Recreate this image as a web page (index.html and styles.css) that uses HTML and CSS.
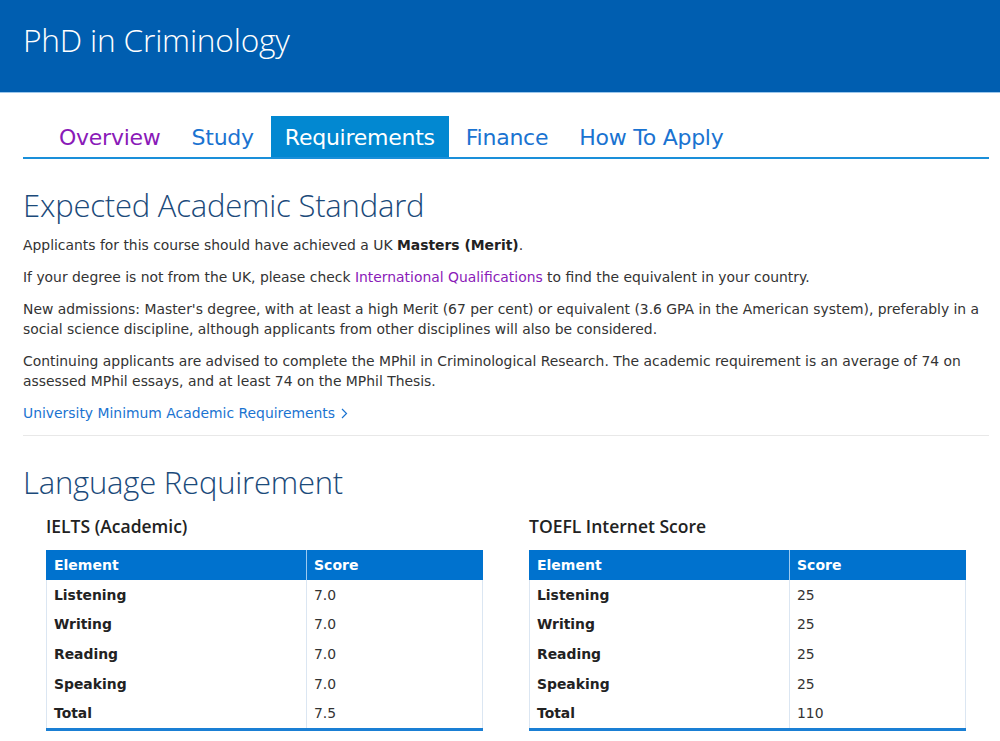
FILE: index.html
```html
<!DOCTYPE html>
<html lang="en">
<head>
<meta charset="utf-8">
<title>PhD in Criminology</title>
<link rel="stylesheet" href="styles.css">
</head>
<body>
<header class="banner">
  <h1 class="banner-title">PhD in Criminology</h1>
</header>
<main class="page">
  <nav class="tabs">
    <a class="tab tab-visited" href="#">Overview</a>
    <a class="tab" href="#">Study</a>
    <a class="tab tab-active" href="#">Requirements</a>
    <a class="tab" href="#">Finance</a>
    <a class="tab" href="#">How To Apply</a>
  </nav>

  <section class="section">
    <h2 class="section-title">Expected Academic Standard</h2>
    <p>Applicants for this course should have achieved a UK <strong>Masters (Merit)</strong>.</p>
    <p>If your degree is not from the UK, please check <a class="link-visited" href="#">International Qualifications</a> to find the equivalent in your country.</p>
    <p>New admissions: Master's degree, with at least a high Merit (67 per cent) or equivalent (3.6 GPA in the American system), preferably in a social science discipline, although applicants from other disciplines will also be considered.</p>
    <p>Continuing applicants are advised to complete the MPhil in Criminological Research. The academic requirement is an average of 74 on assessed MPhil essays, and at least 74 on the MPhil Thesis.</p>
    <p class="more"><a class="link" href="#">University Minimum Academic Requirements <svg class="chev" width="7" height="11" viewBox="0 0 7 11"><path d="M1 1l4.5 4.5L1 10" fill="none" stroke="currentColor" stroke-width="1.2"/></svg></a></p>
  </section>

  <section class="section lang">
    <h2 class="section-title">Language Requirement</h2>
    <div class="tables">
      <div class="score-block">
        <h3 class="score-title">IELTS (Academic)</h3>
        <table class="score-table">
          <thead><tr><th>Element</th><th>Score</th></tr></thead>
          <tbody>
            <tr><td class="el">Listening</td><td>7.0</td></tr>
            <tr><td class="el">Writing</td><td>7.0</td></tr>
            <tr><td class="el">Reading</td><td>7.0</td></tr>
            <tr><td class="el">Speaking</td><td>7.0</td></tr>
            <tr><td class="el">Total</td><td>7.5</td></tr>
          </tbody>
        </table>
      </div>
      <div class="score-block">
        <h3 class="score-title">TOEFL Internet Score</h3>
        <table class="score-table">
          <thead><tr><th>Element</th><th>Score</th></tr></thead>
          <tbody>
            <tr><td class="el">Listening</td><td>25</td></tr>
            <tr><td class="el">Writing</td><td>25</td></tr>
            <tr><td class="el">Reading</td><td>25</td></tr>
            <tr><td class="el">Speaking</td><td>25</td></tr>
            <tr><td class="el">Total</td><td>110</td></tr>
          </tbody>
        </table>
      </div>
    </div>
  </section>
</main>
</body>
</html>
```

FILE: styles.css
```css
html, body {
  margin: 0;
  padding: 0;
  background: #ffffff;
}
body {
  font-family: "DejaVu Sans", Verdana, sans-serif;
  font-size: 13.9px;
  color: #333333;
}
.banner {
  background: #005eb0;
  height: 92px;
  border-bottom: 1px solid #9cc7ec;
  display: flex;
  align-items: center;
  padding: 0 23px;
}
.banner-title {
  margin: 0 0 14px 0;
  font-family: "Open Sans", sans-serif;
  font-weight: 300;
  font-size: 31.7px;
  color: #ffffff;
  letter-spacing: -0.2px;
}
.page {
  padding: 0 11px 0 23px;
}
.tabs {
  display: flex;
  margin-top: 23px;
  padding-left: 22px;
  border-bottom: 2px solid #1a8fd9;
  height: 41px;
  align-items: stretch;
}
.tab {
  display: flex;
  align-items: center;
  padding: 2px 14px 0 14px;
  margin-right: 3px;
  font-size: 22px;
  color: #1a73d1;
  text-decoration: none;
  letter-spacing: -0.25px;
}
.tab-visited { color: #8a1ab8; }
.tab-active {
  background: #0288d1;
  color: #ffffff;
}
.section {
  padding-bottom: 1px;
}
.section-title {
  font-family: "Open Sans", sans-serif;
  font-weight: 300;
  font-size: 31px;
  color: #1b4a7a;
  margin: 26px 0 10px 0;
  line-height: 40px;
  letter-spacing: -0.2px;
}
.section p {
  margin: 0 0 12px 0;
  line-height: 20px;
}
.section p strong {
  color: #222;
}
.link-visited { color: #8a1ab8; text-decoration: none; }
.link { color: #1a73d1; text-decoration: none; }
.chev { vertical-align: -1px; margin-left: 2px; }
.section .more {
  margin-bottom: 0;
  padding-bottom: 12px;
  border-bottom: 1px solid #e8e8e8;
}
.lang .section-title {
  margin-top: 25px;
  margin-bottom: 12px;
}
.tables {
  display: grid;
  grid-template-columns: 437px 437px;
  column-gap: 46px;
  padding-left: 23px;
}
.score-title {
  font-family: "Open Sans", sans-serif;
  font-weight: 600;
  font-size: 17.5px;
  color: #222222;
  margin: 0 0 12px 0;
  line-height: 24px;
}
.score-table {
  width: 100%;
  border-collapse: collapse;
  border-bottom: 3px solid #1a7fd4;
}
.score-table th {
  background: #0072ce;
  color: #ffffff;
  text-align: left;
  font-weight: bold;
  font-size: 14px;
  padding: 0 7px;
  height: 30px;
  border-right: 1px solid #9ccaf0;
}
.score-table th:first-child { border-left: 1px solid #0072ce; }
.score-table th:last-child { border-right: 1px solid #0072ce; }
.score-table td {
  padding: 0 7px;
  height: 29.6px;
  border-right: 1px solid #dbe6f2;
  color: #333;
}
.score-table td:first-child {
  border-left: 1px solid #dbe6f2;
  width: 245px;
}
.score-table td.el {
  font-weight: bold;
  color: #222;
}
```
